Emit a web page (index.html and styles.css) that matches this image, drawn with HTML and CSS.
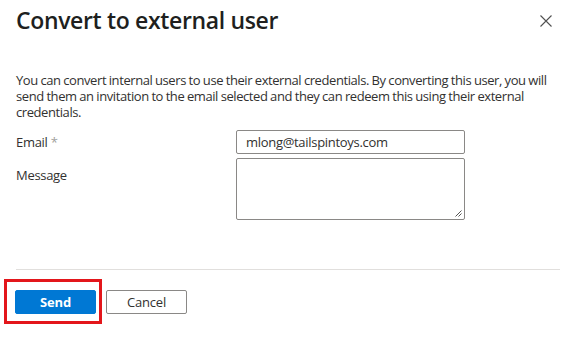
FILE: index.html
```html
<!DOCTYPE html>
<html>
<head>
<meta charset="utf-8">
<link rel="stylesheet" href="styles.css">
</head>
<body>
<div class="dialog">
  <div class="header">
    <h1 class="title">Convert to external user</h1>
    <button class="close" aria-label="Close">
      <svg width="12" height="12" viewBox="0 0 12 12"><path d="M0.5 0.5 L11.5 11.5 M11.5 0.5 L0.5 11.5" stroke="#505050" stroke-width="1.1" fill="none"/></svg>
    </button>
  </div>
  <p class="desc">You can convert internal users to use their external credentials. By converting this user, you will send them an invitation to the email selected and they can redeem this using their external credentials.</p>
  <div class="form">
    <label class="label">Email <span class="req">*</span></label>
    <div class="input">mlong@tailspintoys.com</div>
    <label class="label label-top">Message</label>
    <div class="textarea">
      <svg class="grip" width="8" height="8" viewBox="0 0 8 8"><path d="M7.5 1.5 L1.5 7.5 M7.5 4.5 L4.5 7.5" stroke="#555" stroke-width="1" fill="none"/></svg>
    </div>
  </div>
  <div class="footer">
    <div class="actions">
      <button class="btn primary">Send</button>
      <button class="btn">Cancel</button>
      <div class="highlight"></div>
    </div>
  </div>
</div>
</body>
</html>
```
FILE: styles.css
```css
html, body {
  margin: 0;
  padding: 0;
  background: #fff;
}
body {
  font-family: "Open Sans", "Noto Sans", sans-serif;
  color: #323130;
  width: 574px;
  height: 348px;
  overflow: hidden;
}
.dialog {
  padding: 0 14px 0 16px;
}
.header {
  display: flex;
  align-items: flex-start;
  justify-content: space-between;
  padding-top: 4px;
}
.title {
  margin: 0;
  font-size: 23px;
  font-weight: 600;
  line-height: 32px;
  color: #201f1e;
  letter-spacing: -0.35px;
}
.close {
  border: 0;
  background: none;
  padding: 0;
  margin: 11px 8px 0 0;
  width: 12px;
  height: 12px;
  display: flex;
}
.desc {
  margin: 36px 0 0 0;
  font-size: 13px;
  line-height: 16px;
  letter-spacing: -0.42px;
  word-spacing: -0.3px;
  color: #323130;
}
.form {
  margin-top: 10px;
  display: grid;
  grid-template-columns: 220px 229px;
  row-gap: 4px;
  font-size: 13px;
}
.label {
  line-height: 24px;
  letter-spacing: -0.3px;
}
.label-top {
  padding-top: 5px;
  line-height: 24px;
}
.req {
  color: #a19f9d;
}
.input {
  height: 24px;
  box-sizing: border-box;
  border: 1px solid #8a8886;
  border-radius: 2px;
  padding: 0 9px;
  line-height: 22px;
  letter-spacing: -0.3px;
}
.textarea {
  height: 62px;
  box-sizing: border-box;
  border: 1px solid #8a8886;
  border-radius: 2px;
  position: relative;
}
.grip {
  position: absolute;
  right: 2px;
  bottom: 2px;
}
.footer {
  margin-top: 49px;
  border-top: 1px solid #e1dfdd;
  padding-top: 20px;
}
.actions {
  display: flex;
  gap: 10px;
  position: relative;
  margin-left: -1px;
}
.btn {
  width: 81px;
  height: 24px;
  box-sizing: border-box;
  border: 1px solid #8a8886;
  border-radius: 2px;
  background: #fff;
  font-family: inherit;
  font-size: 13px;
  color: #323130;
  padding: 0;
  letter-spacing: -0.2px;
}
.btn.primary {
  background: #0078d4;
  border-color: #0078d4;
  color: #fff;
  font-weight: 700;
}
.highlight {
  position: absolute;
  left: -11px;
  top: -11px;
  width: 98px;
  height: 45px;
  box-sizing: border-box;
  border: 3px solid #e3161b;
}
```
